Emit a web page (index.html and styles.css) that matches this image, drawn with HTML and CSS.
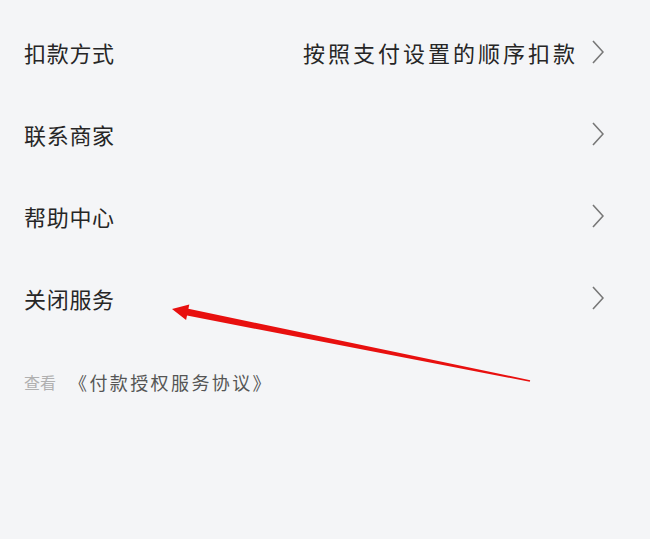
FILE: index.html
```html
<!DOCTYPE html>
<html lang="zh-CN">
<head>
  <meta charset="UTF-8">
  <meta name="viewport" content="width=device-width, initial-scale=1.0">
  <title>服务详情</title>
  <link rel="stylesheet" href="styles.css">
</head>
<body>
  <div class="page">
    <ul class="menu">
      <li class="menu-row">
        <span class="menu-label">扣款方式</span>
        <span class="menu-value">按照支付设置的顺序扣款</span>
        <svg class="chevron" viewBox="0 0 12 24"><path d="M1 1 L11 12 L1 23"/></svg>
      </li>
      <li class="menu-row">
        <span class="menu-label">联系商家</span>
        <svg class="chevron" viewBox="0 0 12 24"><path d="M1 1 L11 12 L1 23"/></svg>
      </li>
      <li class="menu-row">
        <span class="menu-label">帮助中心</span>
        <svg class="chevron" viewBox="0 0 12 24"><path d="M1 1 L11 12 L1 23"/></svg>
      </li>
      <li class="menu-row">
        <span class="menu-label">关闭服务</span>
        <svg class="chevron" viewBox="0 0 12 24"><path d="M1 1 L11 12 L1 23"/></svg>
      </li>
    </ul>

    <p class="agreement">
      <span class="agreement-hint">查看</span>
      <a class="agreement-link">《付款授权服务协议》</a>
    </p>

    <!-- red pointer drawn over the list -->
    <svg class="pointer" width="650" height="539" viewBox="0 0 650 539">
      <polygon points="172,309 189.3,304.4 188.4,308.8 530.2,380.2 529.8,381.8 187,315.6 186.1,320"/>
    </svg>
  </div>
</body>
</html>
```

FILE: styles.css
```css
html, body {
  margin: 0;
  padding: 0;
  background: #f4f5f7;
}
body {
  font-family: "Noto Sans CJK SC", "Noto Sans", sans-serif;
  color: #262626;
}
.page {
  position: relative;
  width: 650px;
  height: 539px;
  overflow: hidden;
  padding-top: 11px;
  box-sizing: border-box;
}
.menu {
  list-style: none;
  margin: 0;
  padding: 0;
}
.menu-row {
  display: flex;
  align-items: center;
  height: 82px;
  padding: 0 46px 0 24px;
}
.menu-label {
  flex: 1;
  font-size: 22px;
  letter-spacing: 0.7px;
  line-height: 1;
}
.menu-value {
  font-size: 22px;
  letter-spacing: 3px;
  line-height: 1;
  margin-right: 14px;
}
.chevron {
  width: 12px;
  height: 24px;
  flex: none;
}
.chevron path {
  fill: none;
  stroke: #777;
  stroke-width: 1.6;
}
.agreement {
  margin: 31px 0 0 24px;
  line-height: 24px;
  display: flex;
  align-items: center;
}
.agreement-hint {
  font-size: 16px;
  color: #b0b0b0;
}
.agreement-link {
  font-size: 18px;
  letter-spacing: 2.4px;
  color: #555;
  margin-left: 13px;
}
.pointer {
  position: absolute;
  left: 0;
  top: 0;
  pointer-events: none;
}
.pointer polygon {
  fill: #e8100f;
}
```
